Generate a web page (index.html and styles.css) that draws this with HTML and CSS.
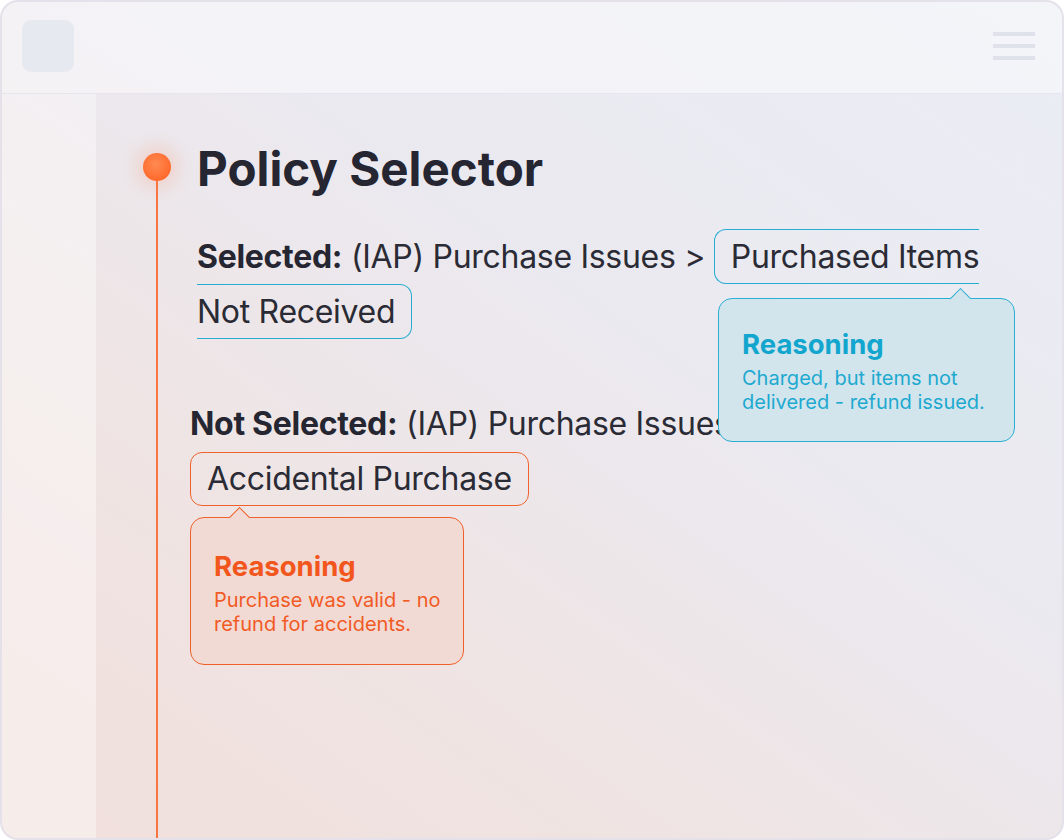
FILE: index.html
```html
<!DOCTYPE html>
<html>
<head>
<meta charset="utf-8">
<link rel="stylesheet" href="styles.css">
</head>
<body>
<div class="frame">
  <header class="topbar">
    <div class="logo"></div>
    <div class="menu"><span></span><span></span><span></span></div>
  </header>
  <div class="body">
    <aside class="sidebar"></aside>
    <main class="main">
      <div class="timeline"><div class="dot"></div><div class="line"></div></div>
      <div class="content">
        <h1 class="title">Policy Selector</h1>
        <div class="row selected">
          <b>Selected:</b> (IAP) Purchase Issues &gt; <span class="chip chip-blue">Purchased Items Not Received</span>
          <div class="tip tip-blue">
            <div class="tip-title">Reasoning</div>
            <div class="tip-text">Charged, but items not delivered - refund issued.</div>
          </div>
        </div>
        <div class="row not-selected">
          <b>Not Selected:</b> (IAP) Purchase Issues &gt; <span class="chip chip-orange">Accidental Purchase</span>
          <div class="tip tip-orange">
            <div class="tip-title">Reasoning</div>
            <div class="tip-text">Purchase was valid - no refund for accidents.</div>
          </div>
        </div>
      </div>
    </main>
  </div>
</div>
</body>
</html>
```
FILE: styles.css
```css
html, body {
  margin: 0;
  padding: 0;
  background: #ffffff;
}
body {
  font-family: Inter, "Noto Sans", "Liberation Sans", sans-serif;
}
.frame {
  width: 1064px;
  height: 840px;
  box-sizing: border-box;
  border: 2px solid #e4e1ea;
  border-radius: 18px;
  overflow: hidden;
  display: flex;
  flex-direction: column;
  background: linear-gradient(35deg, #f1dfdb 0%, #efe4e3 30%, #ebe9f0 60%, #eaedf5 100%);
}
.topbar {
  height: 92px;
  box-sizing: border-box;
  flex: none;
  display: flex;
  justify-content: space-between;
  align-items: flex-start;
  padding: 18px 27px 0 20px;
  background: rgba(255, 255, 255, 0.45);
  border-bottom: 1px solid rgba(215, 212, 228, 0.45);
}
.logo {
  width: 52px;
  height: 52px;
  border-radius: 9px;
  background: #e6e9f0;
}
.menu {
  margin-top: 12px;
  display: flex;
  flex-direction: column;
  gap: 8px;
}
.menu span {
  display: block;
  width: 42px;
  height: 4px;
  background: #dfe2ea;
}
.body {
  flex: 1;
  display: flex;
  min-height: 0;
}
.sidebar {
  width: 94px;
  flex: none;
  background: rgba(255, 255, 255, 0.4);
}
.main {
  flex: 1;
  display: flex;
  gap: 26px;
  padding: 0 0 0 47px;
}
.timeline {
  width: 28px;
  flex: none;
  display: flex;
  flex-direction: column;
  align-items: center;
  padding-top: 59px;
}
.dot {
  width: 28px;
  height: 28px;
  border-radius: 50%;
  background: radial-gradient(circle at 45% 40%, #ff8a52 0%, #ff6a2c 70%, #fb5f22 100%);
  box-shadow: 0 0 16px 8px rgba(255, 120, 60, 0.16);
  flex: none;
}
.line {
  width: 2px;
  flex: 1;
  background: #f97642;
}
.content {
  flex: 1;
  padding-top: 47px;
  padding-right: 40px;
}
.title {
  margin: 0;
  font-size: 47.5px;
  line-height: 56px;
  font-weight: 700;
  color: #252631;
}
.row {
  position: relative;
  font-size: 32px;
  line-height: 55px;
  letter-spacing: -0.3px;
  color: #2a2b35;
}
.row b {
  font-weight: 700;
  color: #252631;
}
.selected {
  margin-top: 32px;
  width: 800px;
}
.not-selected {
  margin-top: 57px;
  margin-left: -7px;
  width: 800px;
}
.chip {
  padding: 7px 16px;
  border: 1px solid;
  border-radius: 12px;
}
.chip-blue {
  border-color: #27acd2;
}
.chip-orange {
  display: inline-block;
  line-height: 38px;
  border-color: #f0622a;
}
.tip {
  position: absolute;
  z-index: 2;
  box-sizing: border-box;
  border: 1px solid;
  border-radius: 14px;
  padding: 29px 14px 0 23px;
  letter-spacing: 0;
}
.tip::before {
  content: "";
  position: absolute;
  top: -8px;
  width: 14px;
  height: 14px;
  background: inherit;
  border-top: 1px solid;
  border-left: 1px solid;
  border-color: inherit;
  transform: rotate(45deg);
}
.tip-title {
  font-size: 27.5px;
  line-height: 32px;
  font-weight: 700;
}
.tip-text {
  margin-top: 6px;
  font-size: 20px;
  line-height: 24px;
}
.tip-blue {
  left: 521px;
  top: 69px;
  width: 297px;
  height: 144px;
  background: #d3e5ec;
  border-color: #2aaed3;
  color: #12a6cf;
}
.tip-blue::before {
  left: 234px;
}
.tip-blue .tip-text {
  color: #1da9d0;
}
.tip-orange {
  left: 0;
  top: 121px;
  width: 274px;
  height: 148px;
  padding-top: 32px;
  background: #f1dad4;
  border-color: #f0602a;
  color: #f2561d;
}
.tip-orange::before {
  left: 41px;
}
.tip-orange .tip-text {
  color: #f15a24;
}
```
